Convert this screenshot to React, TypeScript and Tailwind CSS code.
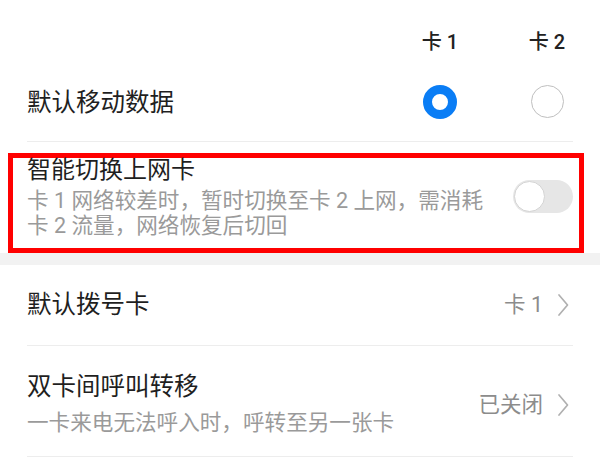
import React from "react";

const font = { fontFamily: 'Roboto, "Noto Sans CJK SC", "Noto Sans", sans-serif' };

function Chevron() {
  return (
    <svg width="12" height="24" viewBox="0 0 12 24" fill="none">
      <path d="M2 2 L10.5 12 L2 22" stroke="#b0b0b0" strokeWidth="1.7" strokeLinecap="round" strokeLinejoin="round" />
    </svg>
  );
}

export default function App() {
  return (
    <div className="w-[600px] h-[465px] bg-white overflow-hidden text-[#1f1f1f]" style={font}>
      {/* Header row */}
      <div className="h-[62px] pt-[30px] flex justify-end pr-[23px] gap-[47px]">
        <div className="w-[60px] text-center text-[20px] leading-[24px] font-medium text-[#222]">卡 1</div>
        <div className="w-[60px] text-center text-[20px] leading-[24px] font-medium text-[#222]">卡 2</div>
      </div>
      {/* Default mobile data */}
      <div className="h-[79px] flex items-center pl-[27px] pr-[23px]">
        <div className="flex-1 text-[24.5px] leading-[28px] pt-[3px]">默认移动数据</div>
        <div className="w-[60px] flex justify-center">
          <div className="w-[34px] h-[34px] rounded-full border-[9px] border-[#0a7df5] bg-white" />
        </div>
        <div className="w-[47px]" />
        <div className="w-[60px] flex justify-center">
          <div className="w-[33px] h-[33px] rounded-full border-[1.5px] border-[#bfbfbf] bg-white" />
        </div>
      </div>
      <div className="mx-[27px] h-px bg-[#ededed]" />
      {/* Highlighted smart switch */}
      <div className="pt-[11px] pl-[8px]">
        <div className="w-[576px] h-[100px] border-[5px] border-[#ff0000] flex items-start pl-[14px] pr-[6px]">
          <div className="flex-1">
            <div className="text-[24px] leading-[24px] whitespace-nowrap">智能切换上网卡</div>
            <div className="mt-[6px] text-[21.6px] leading-[25px] text-[#9a9a9a] whitespace-nowrap">
              <div>卡 1 网络较差时，暂时切换至卡 2 上网，需消耗</div>
              <div>卡 2 流量，网络恢复后切回</div>
            </div>
          </div>
          <div className="mt-[22px] w-[60px] h-[33px] rounded-full bg-[#e6e6e6] flex items-center p-[1px]">
            <div className="w-[31px] h-[31px] rounded-full bg-white border border-[#d4d4d4]" />
          </div>
        </div>
      </div>
      {/* Gray separator */}
      <div className="h-[12px] bg-[#f2f2f2]" />
      {/* Default dial card */}
      <div className="h-[80px] flex items-center pl-[27px] pr-[31px]">
        <div className="flex-1 text-[24.5px] leading-[28px]">默认拨号卡</div>
        <div className="text-[21.5px] leading-[26px] text-[#8c8c8c] mr-[14px]">卡 1</div>
        <Chevron />
      </div>
      <div className="mx-[27px] h-px bg-[#ededed]" />
      {/* Call forwarding */}
      <div className="flex items-center pl-[27px] pr-[31px] pt-[28px] pb-[21px]">
        <div className="flex-1">
          <div className="text-[24.5px] leading-[26px]">双卡间呼叫转移</div>
          <div className="mt-[10px] text-[21.6px] leading-[25px] text-[#9a9a9a]">一卡来电无法呼入时，呼转至另一张卡</div>
        </div>
        <div className="text-[21.5px] leading-[26px] text-[#8c8c8c] mr-[14px]">已关闭</div>
        <Chevron />
      </div>
      <div className="mx-[27px] h-px bg-[#ededed]" />
    </div>
  );
}
